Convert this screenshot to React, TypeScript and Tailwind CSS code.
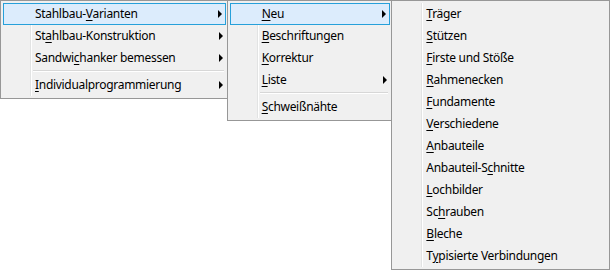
import React from 'react';

type Item =
  | { sep: true }
  | { sep?: false; label: string; mn: number; sub?: boolean; hot?: boolean };

const font = { fontFamily: '"Noto Sans", "Liberation Sans", sans-serif' };

const menu1: Item[] = [
  { label: 'Stahlbau-Varianten', mn: 9, sub: true, hot: true },
  { label: 'Stahlbau-Konstruktion', mn: 2, sub: true },
  { label: 'Sandwichanker bemessen', mn: 6, sub: true },
  { sep: true },
  { label: 'Individualprogrammierung', mn: 0, sub: true },
];

const menu2: Item[] = [
  { label: 'Neu', mn: 0, sub: true, hot: true },
  { label: 'Beschriftungen', mn: 0 },
  { label: 'Korrektur', mn: 0 },
  { label: 'Liste', mn: 0, sub: true },
  { sep: true },
  { label: 'Schweißnähte', mn: 0 },
];

const menu3: Item[] = [
  { label: 'Träger', mn: 0 },
  { label: 'Stützen', mn: 0 },
  { label: 'Firste und Stöße', mn: 0 },
  { label: 'Rahmenecken', mn: 0 },
  { label: 'Fundamente', mn: 0 },
  { label: 'Verschiedene', mn: 0 },
  { label: 'Anbauteile', mn: 0 },
  { label: 'Anbauteil-Schnitte', mn: 11 },
  { label: 'Lochbilder', mn: 0 },
  { label: 'Schrauben', mn: 2 },
  { label: 'Bleche', mn: 0 },
  { label: 'Typisierte Verbindungen', mn: 1 },
];

function Label({ text, mn }: { text: string; mn: number }) {
  return (
    <span className="whitespace-nowrap tracking-[-0.3px]">
      {text.slice(0, mn)}
      <span className="underline underline-offset-2">{text[mn]}</span>
      {text.slice(mn + 1)}
    </span>
  );
}

function Menu({ items, width }: { items: Item[]; width: string }) {
  return (
    <div className={`relative -ml-px border border-[#979797] bg-[#f0f0f0] py-[2px] pl-[2px] pr-px ${width}`}>
      {/* gutter line */}
      <div className="absolute top-[2px] bottom-[2px] left-[29px] w-[2px] border-l border-r border-l-[#e2e3e3] border-r-white" />
      {items.map((it, i) =>
        it.sep ? (
          <div key={i} className="relative h-[4px] pl-[28px]">
            <div className="mt-px ml-[2px] mr-[2px] h-px bg-[#d7d7d7]" />
            <div className="ml-[2px] mr-[2px] h-px bg-white" />
          </div>
        ) : (
          <div
            key={i}
            className={`relative flex h-[22px] items-center justify-between pr-[3px] text-[12px] text-black ${
              it.hot ? 'border border-[#26a0da] bg-[#dcecfc] pl-[31px]' : 'pl-[32px]'
            }`}
          >
            <Label text={it.label} mn={it.mn} />
            {it.sub && (
              <span className="h-0 w-0 border-y-[4px] border-l-[4px] border-y-transparent border-l-black" />
            )}
          </div>
        )
      )}
    </div>
  );
}

export default function App() {
  return (
    <div className="flex h-[270px] w-[610px] items-start bg-white pl-px" style={font}>
      <Menu items={menu1} width="w-[228px]" />
      <Menu items={menu2} width="w-[166px]" />
      <Menu items={menu3} width="w-[219px]" />
    </div>
  );
}
